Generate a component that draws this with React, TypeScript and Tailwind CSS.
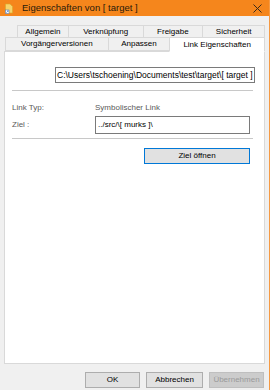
const font = "font-['Liberation_Sans',Arial,sans-serif]";

function Tab({ label, w, h, selected }: { label: string; w: string; h: string; selected?: boolean }) {
  return (
    <div
      className={`${w} ${h} flex items-center justify-center border border-[#d9d9d9] -ml-px first:ml-0 text-[8px] text-black ${
        selected ? "bg-white border-b-white relative z-10 -mb-px" : "bg-[#f0f0f0]"
      }`}
    >
      {label}
    </div>
  );
}

function Button({ label, w, disabled, focus }: { label: string; w: string; disabled?: boolean; focus?: boolean }) {
  return (
    <div
      className={`${w} h-[16px] flex items-center justify-center text-[8px] ${
        disabled
          ? "bg-[#cccccc] border border-[#bfbfbf] text-[#9a9a9a]"
          : focus
          ? "bg-[#e1e1e1] border border-[#0078d7] text-black"
          : "bg-[#e1e1e1] border border-[#adadad] text-black"
      }`}
    >
      {label}
    </div>
  );
}

export default function App() {
  return (
    <div className={`w-[270px] h-[390px] bg-[#f0f0f0] flex flex-col border-r border-[#f59a44] ${font}`}>
      {/* Title bar */}
      <div className="h-[16px] bg-[#f5861c] flex items-center pl-[5px] pr-[7px] shrink-0">
        <svg width="8" height="11" viewBox="0 0 8 11">
          <path d="M0.5 1 H5 L7.5 3.5 V10 H0.5 Z" fill="#f7d36b" stroke="#d9a928" strokeWidth="0.6" />
          <rect x="0.5" y="7" width="3.5" height="3.5" fill="#ffffff" stroke="#3a6fc4" strokeWidth="0.5" />
          <path d="M1.3 9.7 L3.2 7.8 M2.2 7.8 H3.2 V8.8" stroke="#3a6fc4" strokeWidth="0.6" fill="none" />
        </svg>
        <span className="ml-[9px] text-[9.5px] text-[#2a1a0a]">Eigenschaften von [ target ]</span>
        <svg className="ml-auto" width="9" height="9" viewBox="0 0 9 9">
          <path d="M0.5 0.5 L8.5 8.5 M8.5 0.5 L0.5 8.5" stroke="#3a2a1a" strokeWidth="1" />
        </svg>
      </div>

      <div className="pl-[4px] pr-[4px] pt-[9px] flex flex-col">
        {/* Tabs */}
        <div className="flex pl-[13px]">
          <Tab label="Allgemein" w="w-[52px]" h="h-[13px]" />
          <Tab label="Verknüpfung" w="w-[76px]" h="h-[13px]" />
          <Tab label="Freigabe" w="w-[61px]" h="h-[13px]" />
          <Tab label="Sicherheit" w="w-[63px]" h="h-[13px]" />
        </div>
        <div className="flex pl-[1px] -mt-px">
          <Tab label="Vorgängerversionen" w="w-[104px]" h="h-[14px]" />
          <Tab label="Anpassen" w="w-[63px]" h="h-[14px]" />
          <Tab label="Link Eigenschaften" w="w-[96px]" h="h-[15px]" selected />
        </div>

        {/* Panel */}
        <div className="h-[313px] bg-white border border-[#d9d9d9] flex flex-col px-[7px]">
          <div className="mt-[15px] ml-[43px] w-[200px] h-[16px] border border-[#7a7a7a] flex items-center overflow-hidden whitespace-nowrap text-[8.5px] text-black pl-[1px]">
            C:\Users\tschoening\Documents\test\target\[ target ]
          </div>
          <div className="mt-[7px] w-[241px] border-t border-[#c8c8c8]" />
          <div className="mt-[12px] flex items-center text-[8px] text-[#5a5a5a] h-[10px]">
            <span className="w-[83px]">Link Typ:</span>
            <span>Symbolischer Link</span>
          </div>
          <div className="mt-[3px] flex items-center text-[8px]">
            <span className="w-[83px] text-[#5a5a5a]">Ziel :</span>
            <div className="w-[155px] h-[18px] border border-[#7a7a7a] flex items-center pl-[2px] text-black">
              ../src/\[ murks ]\
            </div>
          </div>
          <div className="mt-[4px] w-[241px] border-t border-[#c8c8c8]" />
          <div className="mt-[9px] flex">
            <div className="ml-[132px]">
              <Button label="Ziel öffnen" w="w-[106px]" focus />
            </div>
          </div>
        </div>
      </div>

      {/* Bottom buttons */}
      <div className="mt-[8px] flex justify-end gap-[6px] pr-[5px]">
        <Button label="OK" w="w-[55px]" />
        <Button label="Abbrechen" w="w-[57px]" />
        <Button label="Übernehmen" w="w-[55px]" disabled />
      </div>
    </div>
  );
}
